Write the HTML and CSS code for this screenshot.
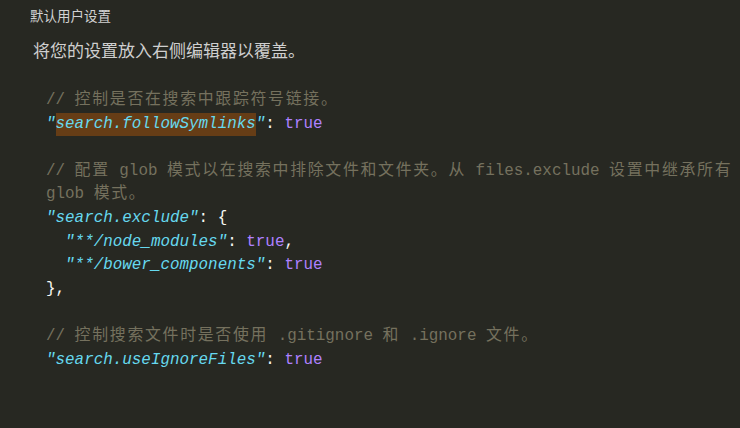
FILE: index.html
```html
<!DOCTYPE html>
<html lang="zh-CN">
<head>
<meta charset="utf-8">
<title>默认用户设置</title>
<link rel="stylesheet" href="styles.css">
</head>
<body>
<div class="page">
  <div class="title">默认用户设置</div>
  <div class="subtitle">将您的设置放入右侧编辑器以覆盖。</div>
  <div class="code">
    <div class="line cm">// <span class="h">控制是否在搜索中跟踪符号链接。</span></div>
    <div class="line"><span class="k">"<span class="hl">search.followSymlinks</span>"</span><span class="p">: </span><span class="b">true</span></div>
    <div class="blank"></div>
    <div class="line cm">// <span class="h">配置</span> glob <span class="h">模式以在搜索中排除文件和文件夹。从</span> files.exclude <span class="h">设置中继承所有</span></div>
    <div class="line cm">glob <span class="h">模式。</span></div>
    <div class="line"><span class="k">"search.exclude"</span><span class="p">: {</span></div>
    <div class="line">  <span class="k">"**/node_modules"</span><span class="p">: </span><span class="b">true</span><span class="p">,</span></div>
    <div class="line">  <span class="k">"**/bower_components"</span><span class="p">: </span><span class="b">true</span></div>
    <div class="line"><span class="p">},</span></div>
    <div class="blank"></div>
    <div class="line cm">// <span class="h">控制搜索文件时是否使用</span> .gitignore <span class="h">和</span> .ignore <span class="h">文件。</span></div>
    <div class="line"><span class="k">"search.useIgnoreFiles"</span><span class="p">: </span><span class="b">true</span></div>
  </div>
</div>
</body>
</html>
```
FILE: styles.css
```css
html, body {
  margin: 0;
  padding: 0;
  background: #272822;
  height: 100%;
}
.page {
  padding: 6px 0 0 30px;
  font-family: "Noto Sans CJK SC", "Noto Sans", sans-serif;
}
.title {
  font-size: 13.5px;
  line-height: 18px;
  color: #d2d2d2;
}
.subtitle {
  margin-top: 14px;
  padding-left: 3px;
  font-size: 17px;
  line-height: 24px;
  color: #cfcfcf;
}
.code {
  margin-top: 27px;
  padding-left: 16px;
  font-family: "Liberation Mono", "Noto Sans CJK SC", monospace;
  font-size: 15.9px;
  line-height: 23.6px;
  color: #f8f8f2;
}
.line {
  white-space: pre;
  height: 23.6px;
}
.blank {
  height: 23.6px;
}
.cm {
  color: #75715e;
}
.h {
  letter-spacing: 1.7px;
}
.k {
  color: #66d9ef;
  font-style: italic;
}
.hl {
  display: inline-block;
  background: #663d16;
  line-height: 23.6px;
}
.p {
  color: #f8f8f2;
}
.b {
  color: #ae81ff;
}
```
